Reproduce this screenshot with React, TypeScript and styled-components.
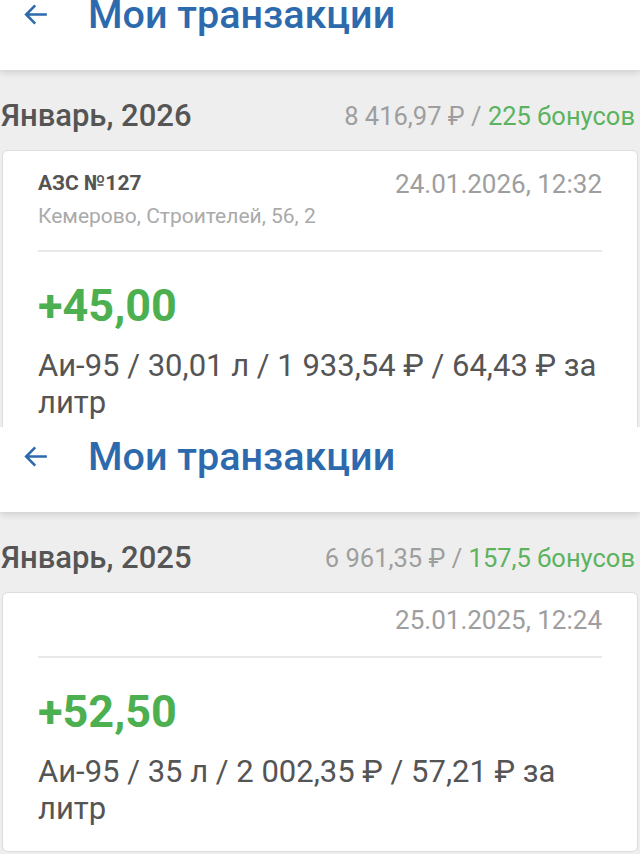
import styled, { createGlobalStyle } from 'styled-components'

const GlobalStyle = createGlobalStyle`
  html, body {
    margin: 0;
    padding: 0;
    background: #ffffff;
    font-family: Roboto, 'Noto Sans', Arial, sans-serif;
  }
`

const Page = styled.div`
  width: 640px;
  display: flex;
  flex-direction: column;
`

const Screen = styled.section<{ $height: number }>`
  height: ${p => p.$height}px;
  overflow: hidden;
  background: #eeeeee;
`

const Scroll = styled.div<{ $shift: number }>`
  margin-top: ${p => -p.$shift}px;
  display: flex;
  flex-direction: column;
`

const Header = styled.header`
  height: 85px;
  background: #ffffff;
  display: flex;
  align-items: flex-start;
  padding: 8px 0 0 21px;
  box-sizing: border-box;
  gap: 36px;
  box-shadow: 0 3px 6px rgba(0, 0, 0, 0.12);
  position: relative;
  z-index: 1;
`

const Back = styled.svg`
  width: 31px;
  height: 31px;
  margin-top: 6px;
  flex: none;
`

const Title = styled.h1`
  margin: 0;
  font-size: 39.5px;
  font-weight: 500;
  color: #2d6aad;
  line-height: 44px;
  white-space: nowrap;
`

const MonthRow = styled.div`
  height: 80px;
  box-sizing: border-box;
  display: flex;
  align-items: flex-start;
  justify-content: space-between;
  padding: 28px 5px 0 1px;
`

const Month = styled.h2`
  margin: 0;
  font-size: 31px;
  font-weight: 500;
  line-height: 36px;
  color: #555555;
`

const Totals = styled.div`
  font-size: 25.5px;
  line-height: 36px;
  color: #9e9e9e;
  white-space: nowrap;
`

const Bonus = styled.span`
  color: #5cb35f;
`

const Card = styled.article`
  margin: 0 2px;
  background: #ffffff;
  border: 1px solid #dddddd;
  border-radius: 6px;
  padding: 12px 35px 24px 35px;
  display: flex;
  flex-direction: column;
`

const Top = styled.div`
  display: flex;
  justify-content: space-between;
  align-items: flex-start;
  padding-bottom: 21px;
  border-bottom: 2px solid #e8e8e8;
`

const Place = styled.div`
  display: flex;
  flex-direction: column;
`

const Station = styled.div`
  font-size: 21px;
  font-weight: 700;
  line-height: 40px;
  color: #555555;
`

const Address = styled.div`
  font-size: 21px;
  line-height: 26px;
  color: #aaaaaa;
`

const Date = styled.div<{ $low?: boolean }>`
  font-size: 26px;
  line-height: 30px;
  color: #9e9e9e;
  margin-left: auto;
  margin-top: ${p => (p.$low ? 6 : 0)}px;
`

const Amount = styled.div`
  margin-top: 28px;
  font-size: 45px;
  font-weight: 700;
  color: #4caf50;
  line-height: 52px;
`

const Details = styled.div`
  margin-top: 15px;
  font-size: 31px;
  line-height: 37px;
  color: #555555;
`

type Tx = {
  station?: string
  address?: string
  date: string
  amount: string
  details: string
}

type Props = {
  height: number
  shift: number
  month: string
  sum: string
  bonus: string
  tx: Tx
}

function TxScreen({ height, shift, month, sum, bonus, tx }: Props) {
  return (
    <Screen $height={height}>
      <Scroll $shift={shift}>
        <Header>
          <Back viewBox="0 0 24 24" fill="none" stroke="#2d6aad" strokeWidth="2">
            <path d="M20 12H4M11 5l-7 7 7 7" />
          </Back>
          <Title>Мои транзакции</Title>
        </Header>
        <MonthRow>
          <Month>{month}</Month>
          <Totals>
            {sum} / <Bonus>{bonus}</Bonus>
          </Totals>
        </MonthRow>
        <Card>
          <Top>
            {tx.station && (
              <Place>
                <Station>{tx.station}</Station>
                <Address>{tx.address}</Address>
              </Place>
            )}
            <Date $low={!!tx.station}>{tx.date}</Date>
          </Top>
          <Amount>{tx.amount}</Amount>
          <Details>{tx.details}</Details>
        </Card>
      </Scroll>
    </Screen>
  )
}

export default function App() {
  return (
    <Page>
      <GlobalStyle />
      <TxScreen
        height={427}
        shift={15}
        month="Январь, 2026"
        sum="8 416,97 ₽"
        bonus="225 бонусов"
        tx={{
          station: 'АЗС №127',
          address: 'Кемерово, Строителей, 56, 2',
          date: '24.01.2026, 12:32',
          amount: '+45,00',
          details: 'Аи-95 / 30,01 л / 1 933,54 ₽ / 64,43 ₽ за литр',
        }}
      />
      <TxScreen
        height={427}
        shift={0}
        month="Январь, 2025"
        sum="6 961,35 ₽"
        bonus="157,5 бонусов"
        tx={{
          date: '25.01.2025, 12:24',
          amount: '+52,50',
          details: 'Аи-95 / 35 л / 2 002,35 ₽ / 57,21 ₽ за литр',
        }}
      />
    </Page>
  )
}
